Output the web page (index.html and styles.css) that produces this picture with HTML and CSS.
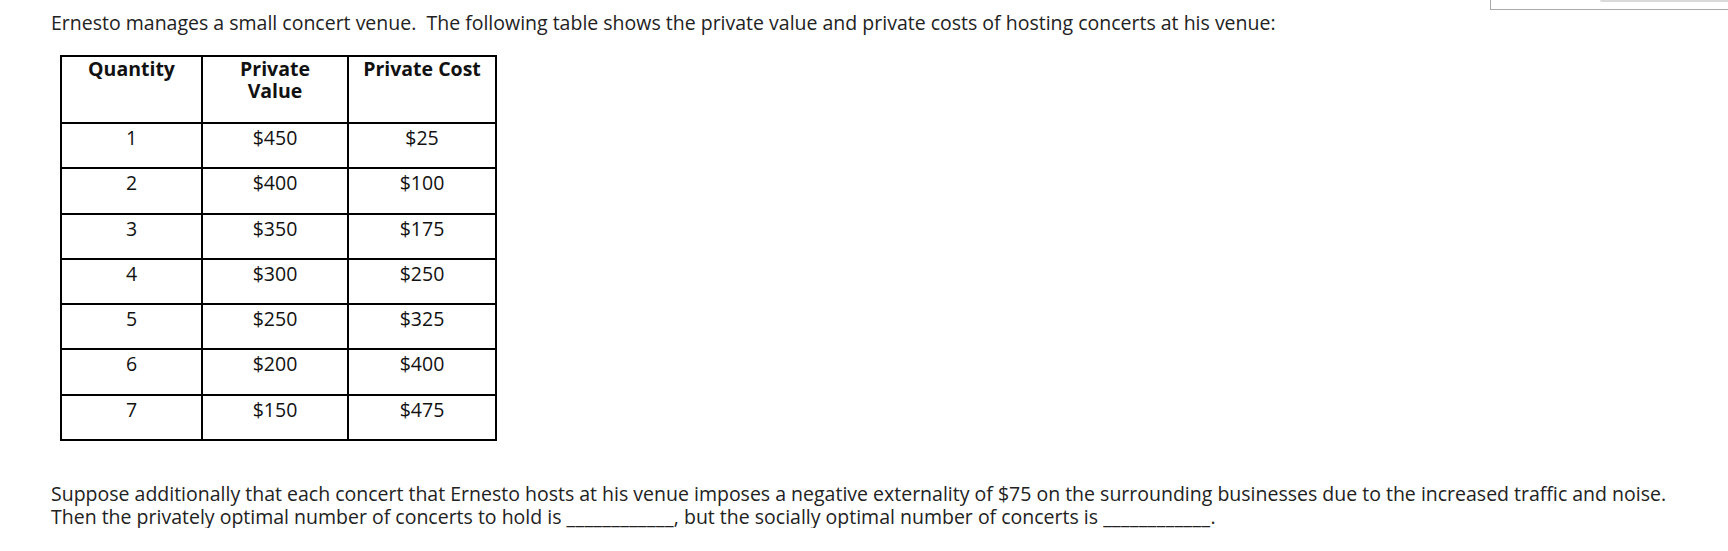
FILE: index.html
```html
<!DOCTYPE html>
<html lang="en">
<head>
<meta charset="utf-8">
<title>Concert venue externality</title>
<link rel="stylesheet" href="styles.css">
</head>
<body>
<div class="corner-box"><div class="corner-bar"></div></div>
<main class="question">
  <p class="intro">Ernesto manages a small concert venue.&nbsp; The following table shows the private value and private costs of hosting concerts at his venue:</p>
  <table class="data">
    <colgroup>
      <col class="c1"><col class="c2"><col class="c3">
    </colgroup>
    <thead>
      <tr><th>Quantity</th><th>Private<br>Value</th><th>Private Cost</th></tr>
    </thead>
    <tbody>
      <tr><td>1</td><td>$450</td><td>$25</td></tr>
      <tr><td>2</td><td>$400</td><td>$100</td></tr>
      <tr><td>3</td><td>$350</td><td>$175</td></tr>
      <tr><td>4</td><td>$300</td><td>$250</td></tr>
      <tr><td>5</td><td>$250</td><td>$325</td></tr>
      <tr><td>6</td><td>$200</td><td>$400</td></tr>
      <tr><td>7</td><td>$150</td><td>$475</td></tr>
    </tbody>
  </table>
  <p class="outro">Suppose additionally that each concert that Ernesto hosts at his venue imposes a negative externality of $75 on the surrounding businesses due to the increased traffic and noise.<br>Then the privately optimal number of concerts to hold is <span class="blank">____________</span>, but the socially optimal number of concerts is <span class="blank">____________</span>.</p>
</main>
</body>
</html>
```

FILE: styles.css
```css
html, body {
  margin: 0;
  padding: 0;
  background: #ffffff;
}

body {
  font-family: "Open Sans", "DejaVu Sans", sans-serif;
  font-size: 19.5px;
  color: #222222;
  position: relative;
  overflow: hidden;
}

.question {
  padding: 11px 0 0 51px;
}

.intro {
  margin: 0;
  line-height: 23px;
}

.data {
  margin: 21px 0 0 9px;
  border-collapse: collapse;
  table-layout: fixed;
  width: 435px;
  line-height: 22px;
}

.data .c1 { width: 141px; }
.data .c2 { width: 146px; }
.data .c3 { width: 148px; }

.data th,
.data td {
  border: 2px solid #000000;
  text-align: center;
  vertical-align: top;
  color: #111111;
}

.data th {
  font-weight: 700;
  padding: 1px 4px 20px;
}

.data td {
  font-weight: 400;
  padding: 3px 4px 18.3px;
}

.outro {
  margin: 41px 0 0;
  line-height: 23px;
}

.blank {
  letter-spacing: 0.4px;
}

.corner-box {
  position: absolute;
  left: 1490px;
  top: -40px;
  width: 300px;
  height: 48px;
  border: 1px solid #a9a9a9;
}

.corner-bar {
  position: absolute;
  left: 109px;
  bottom: 7px;
  width: 128px;
  height: 2px;
  background: #dadada;
  border-bottom-left-radius: 2px;
}
```
